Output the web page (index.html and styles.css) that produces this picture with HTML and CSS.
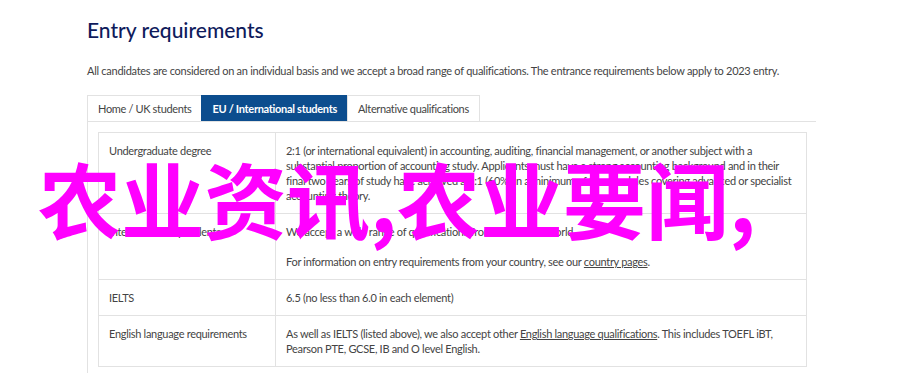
FILE: index.html
```html
<!DOCTYPE html>
<html lang="en">
<head>
  <meta charset="UTF-8" />
  <title>Entry requirements</title>
  <link rel="stylesheet" href="styles.css">
</head>
<body>

  <div class="page">
    <h1>Entry requirements</h1>
    <p class="intro">All candidates are considered on an individual basis and we accept a broad range of qualifications. The entrance requirements below apply to 2023 entry.</p>

    <div class="tabs" role="tablist">
      <button class="tab">Home / UK students</button>
      <button class="tab active">EU / International students</button>
      <button class="tab">Alternative qualifications</button>
    </div>

    <div class="panel">
      <table class="reqs">
        <tbody>
          <tr>
            <td class="label">Undergraduate degree</td>
            <td>2:1 (or international equivalent) in accounting, auditing, financial management, or another subject with a substantial proportion of accounting study. Applicants must have a strong accounting background and in their final two years of study have achieved a 2:1 (60%) in a minimum of four modules covering advanced or specialist accounting theory.</td>
          </tr>
          <tr>
            <td class="label">International equivalents</td>
            <td>
              <p>We accept a wide range of qualifications from all over the world.</p>
              <p>For information on entry requirements from your country, see our <a href="#">country pages</a>.</p>
            </td>
          </tr>
          <tr>
            <td class="label">IELTS</td>
            <td>6.5 (no less than 6.0 in each element)</td>
          </tr>
          <tr>
            <td class="label">English language requirements</td>
            <td>As well as IELTS (listed above), we also accept other <a href="#">English language qualifications</a>. This includes TOEFL iBT, Pearson PTE, GCSE, IB and O level English.</td>
          </tr>
        </tbody>
      </table>
    </div>
  </div>

  <!-- watermark over the page -->
  <div class="stamp">农业资讯,农业要闻,</div>

</body>
</html>
```

FILE: styles.css
```css
/* Reset */
* {
  box-sizing: border-box;
}

body {
  margin: 0;
  background: #fff;
  font-family: Lato, 'Liberation Sans', sans-serif;
  color: #444;
  position: relative;
  overflow: hidden;
}

.page {
  padding: 17px 0 0 87px;
  width: 816px;
}

h1 {
  margin: 0 0 20px;
  font-size: 21px;
  line-height: 26px;
  font-weight: 500;
  color: #0f1b5c;
}

.intro {
  margin: 0 0 17px;
  font-size: 11px;
  line-height: 15px;
  letter-spacing: -0.27px;
}

.tabs {
  display: flex;
}

.tab {
  font-family: inherit;
  font-size: 11px;
  line-height: 14px;
  letter-spacing: -0.35px;
  padding: 6px 10px 5px;
  background: #fff;
  color: #444;
  border: 1px solid #e2e2e2;
  border-bottom: none;
  margin-right: -1px;
  cursor: pointer;
}
.tab.active {
  background: #0c4d8e;
  border-color: #0c4d8e;
  color: #fff;
  font-weight: 700;
  letter-spacing: -0.3px;
}

.panel {
  border-top: 1px solid #e2e2e2;
  border-left: 1px solid #e2e2e2;
  padding: 10px 9px 6px 10px;
}

.reqs {
  width: 100%;
  border-collapse: collapse;
  border: 1px solid #e2e2e2;
}
.reqs td {
  border-bottom: 1px solid #e2e2e2;
  padding: 10px 10px;
  font-size: 11px;
  line-height: 15px;
  letter-spacing: -0.3px;
  vertical-align: top;
}
.reqs td.label {
  width: 177px;
  border-right: 1px solid #e2e2e2;
}
.reqs p {
  margin: 0;
}
.reqs p + p {
  margin-top: 15px;
}
.reqs a {
  color: #444;
  text-decoration: underline;
}

.stamp {
  position: absolute;
  left: 38px;
  top: 152px;
  font-family: "Noto Sans CJK SC", sans-serif;
  font-size: 83px;
  line-height: 90px;
  font-weight: 700;
  color: #ff00ff;
  white-space: nowrap;
}
```
